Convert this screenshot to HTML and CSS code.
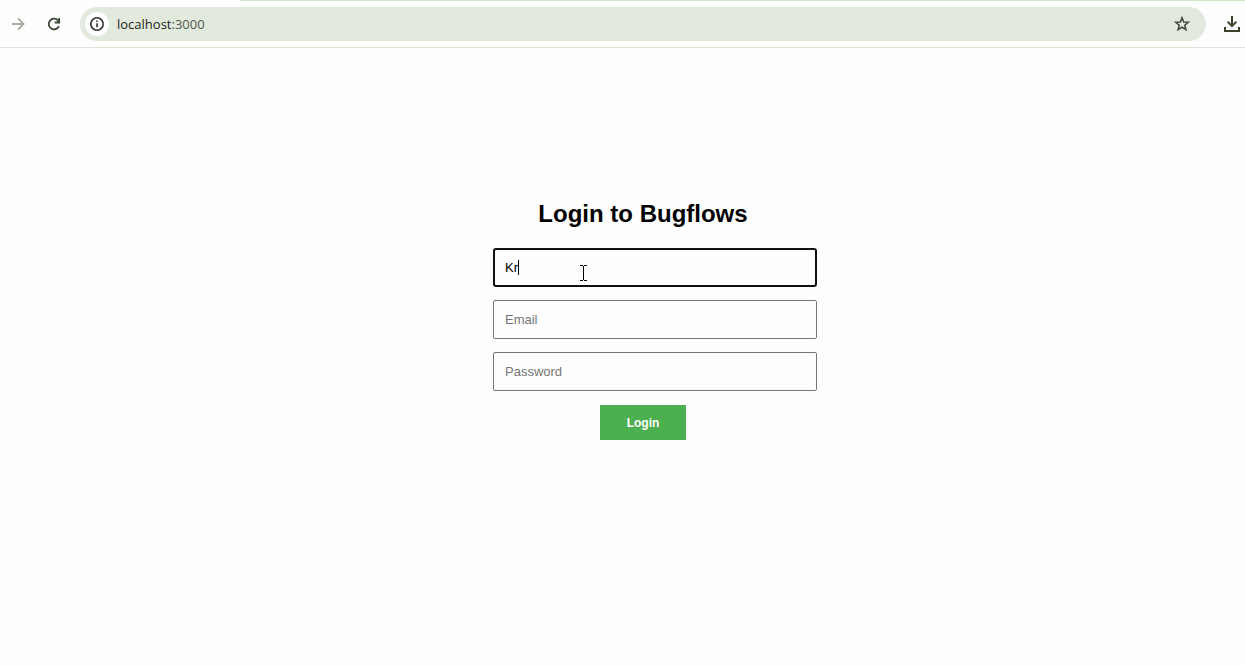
FILE: index.html
```html
<!DOCTYPE html>
<html lang="en">
<head>
<meta charset="utf-8">
<title>Bugflows</title>
<link rel="stylesheet" href="styles.css">
</head>
<body>
<header class="toolbar">
  <div class="tab-edge"></div>
  <button class="icon-button forward" type="button" aria-label="Forward">
    <svg width="16" height="16" viewBox="0 0 16 16" fill="none" stroke="currentColor" stroke-width="1.8"><path d="M2 8h11.2M8 2.4 13.6 8 8 13.6"/></svg>
  </button>
  <button class="icon-button reload" type="button" aria-label="Reload">
    <svg width="16" height="16" viewBox="0 0 16 16" fill="none" stroke="currentColor" stroke-width="1.8"><path d="M12.9 10.1A5.3 5.3 0 1 1 12 4.5l1.3 1.6"/><path d="M13.2 2v4.5H8.7"/></svg>
  </button>
  <div class="address">
    <button class="site-info" type="button" aria-label="Site information">
      <svg width="16" height="16" viewBox="0 0 16 16" fill="none" stroke="currentColor" stroke-width="1.6"><circle cx="8" cy="8" r="6.2"/><path d="M8 7.2v4M8 4.5v1.6"/></svg>
    </button>
    <div class="url">localhost<span class="port">:3000</span></div>
    <button class="icon-button star" type="button" aria-label="Bookmark">
      <svg width="16" height="16" viewBox="0 0 16 16" fill="none" stroke="currentColor" stroke-width="1.6"><path d="m8 1.800 1.700 4.200 4.500.3-3.400 2.900 1.100 4.400L8 11.200l-3.900 2.400 1.100-4.400-3.400-2.900L6.300 6z"/></svg>
    </button>
  </div>
  <button class="icon-button download" type="button" aria-label="Downloads">
    <svg width="18" height="18" viewBox="0 0 18 18" fill="none" stroke="currentColor" stroke-width="2"><path d="M9 1v10M4.700 6.800 9 11.100l4.300-4.300M2 12v4h14v-4"/></svg>
  </button>
</header>
<main class="page">
  <form class="login">
    <h1 class="title">Login to Bugflows</h1>
    <div class="field-wrap">
      <input class="field active" type="text" aria-label="Name" value="Kr">
      <span class="caret"></span>
      <svg class="pointer" width="7" height="16" viewBox="0 0 7 16" fill="none" stroke="#000" shape-rendering="crispEdges"><path d="M0 .5h3M4 .5h3M3.5 1v14M0 15.5h3M4 15.5h3"/></svg>
    </div>
    <input class="field" type="email" aria-label="Email" placeholder="Email">
    <input class="field" type="password" aria-label="Password" placeholder="Password">
    <button class="submit" type="button">Login</button>
  </form>
</main>
</body>
</html>
```
FILE: styles.css
```css
* {
  box-sizing: border-box;
}

body {
  margin: 0;
  background: #fefefe;
  font-family: "Liberation Sans", Arial, sans-serif;
  overflow-x: hidden;
}

button {
  border: 0;
  padding: 0;
}

svg {
  display: block;
}

.toolbar {
  position: relative;
  display: flex;
  align-items: center;
  height: 48px;
  padding: 0 4px 0 10px;
  border-bottom: 1px solid #e1e3d9;
}

.tab-edge {
  position: absolute;
  top: 0;
  left: 240px;
  right: 0;
  height: 1px;
  background: #cfe5c9;
}

.icon-button {
  flex: none;
  background: transparent;
}

.forward {
  color: #a9aca3;
}

.reload {
  margin-left: 20px;
  color: #37452f;
}

.address {
  flex: 1;
  display: flex;
  align-items: center;
  height: 34px;
  margin: 0 17px 0 18px;
  padding: 0 16px 0 5px;
  border-radius: 17px;
  background: #e2eade;
}

.site-info {
  display: grid;
  place-items: center;
  width: 24px;
  height: 24px;
  border-radius: 50%;
  background: #fefefe;
  color: #30352e;
}

.url {
  flex: 1;
  margin-left: 8px;
  color: #1b1f19;
  font: 13px/20px "Open Sans", "Noto Sans", sans-serif;
}

.port {
  color: #50564c;
}

.star {
  color: #454b44;
}

.download {
  color: #37452f;
}

.page {
  display: flex;
  justify-content: center;
  padding: 152px 0 40px 41px;
}

.login {
  display: flex;
  flex-direction: column;
  align-items: center;
  width: 300px;
}

.title {
  margin: 0 0 20px;
  color: #000;
  font-size: 24px;
  line-height: 28px;
}

.field-wrap {
  position: relative;
  align-self: flex-start;
  display: flex;
}

.field {
  align-self: flex-start;
  flex: none;
  width: 324px;
  height: 39px;
  margin: 0 0 13px;
  padding: 0 11px;
  border: 1px solid #767676;
  border-radius: 2px;
  background: #fefefe;
  color: #000;
  font: 13px "Liberation Sans", Arial, sans-serif;
}

.field::placeholder {
  color: #757575;
}

.active {
  padding: 0 10px;
  border: 2px solid #101010;
  border-radius: 3px;
}

.caret {
  position: absolute;
  top: 12px;
  left: 25px;
  width: 1px;
  height: 15px;
  background: #000;
}

.pointer {
  position: absolute;
  top: 17px;
  left: 87px;
}

.submit {
  width: 86px;
  height: 35px;
  margin-top: 1px;
  background: #4caf50;
  color: #fff;
  font: bold 12px "Liberation Sans", Arial, sans-serif;
}
```
